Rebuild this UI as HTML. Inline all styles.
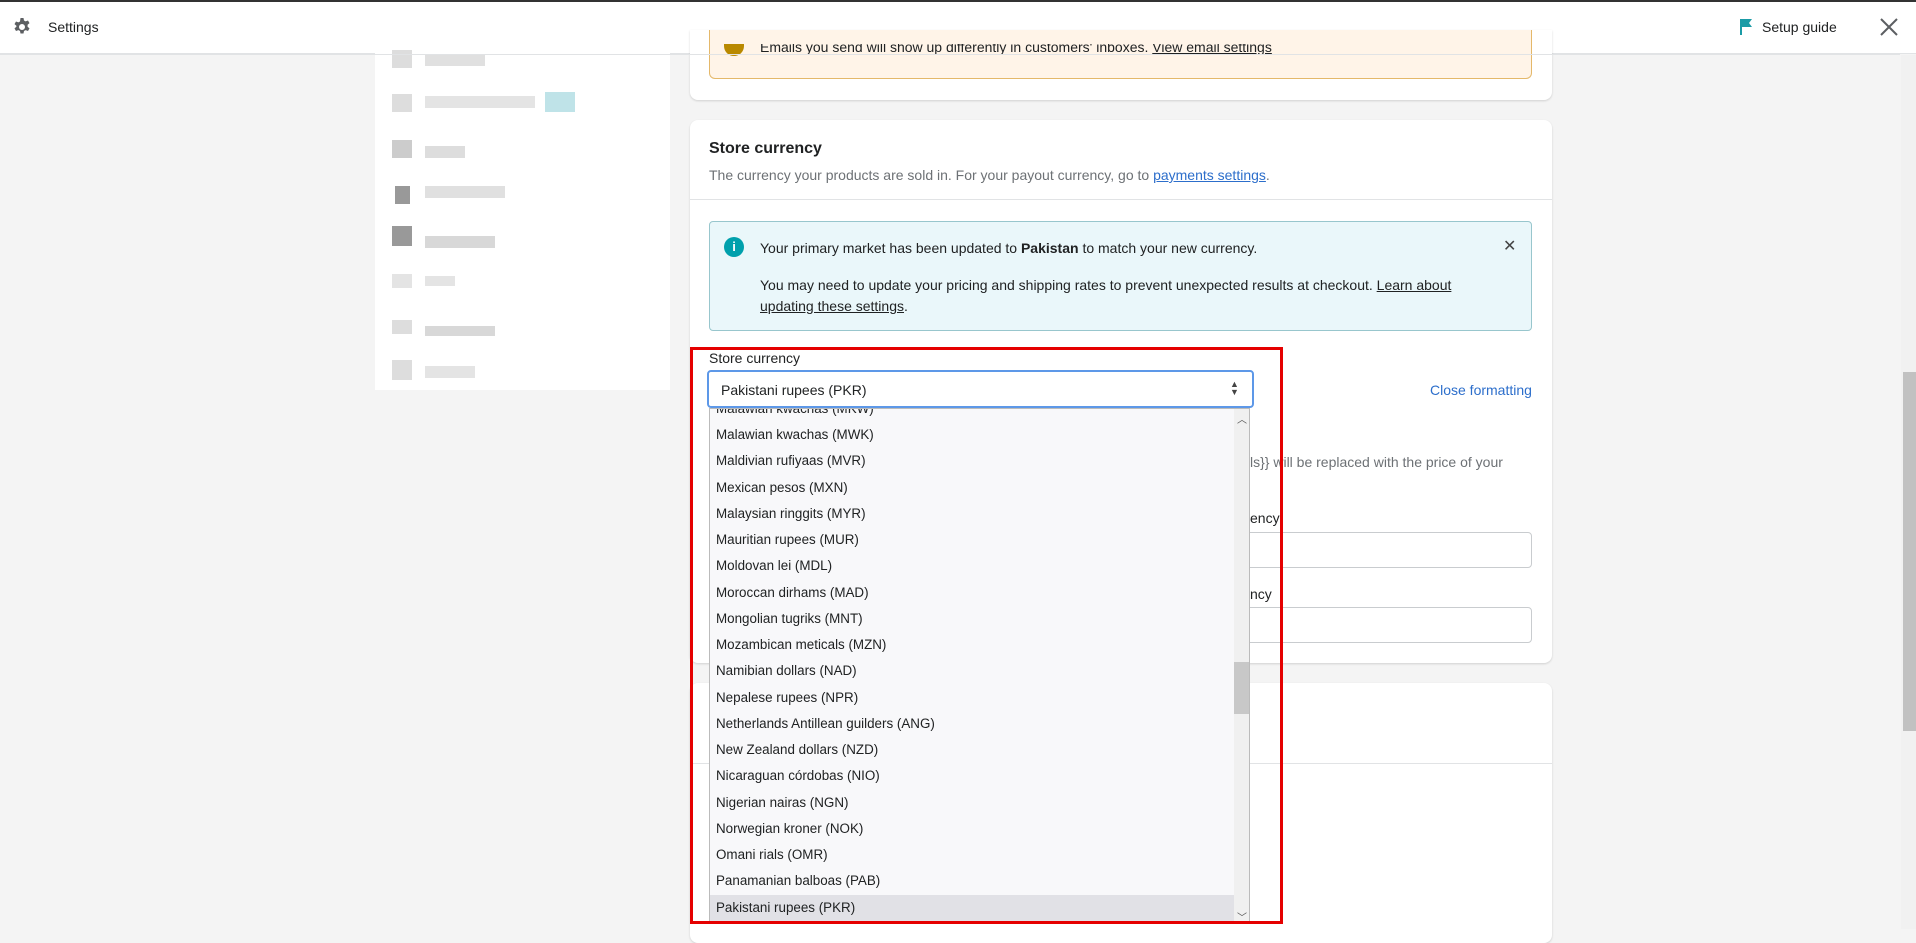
<!DOCTYPE html>
<html><head><meta charset="utf-8"><style>
*{box-sizing:border-box;margin:0;padding:0}
body{width:1916px;height:929px;overflow:hidden;background:#f4f4f4;font-family:"Liberation Sans",sans-serif;color:#202223;position:relative;font-size:14px}
.abs{position:absolute}
.top{left:0;top:0;width:1916px;height:54px;background:#fff;border-bottom:1px solid #e1e3e5;border-top:2px solid #333}
.card{background:#fff;border-radius:8px;box-shadow:0 1px 2px rgba(0,0,0,.15)}
.sb{background:#fff}
.blk{position:absolute;background:#d0d0d0}
.item{position:absolute;left:0;width:524px;height:26.25px;line-height:26.25px;padding-left:6px;font-size:13.4px;color:#202223;white-space:nowrap}
a{color:#2c6ecb}
</style></head><body>
<div class="abs top"></div>
<svg class="abs" style="left:12px;top:17px" width="20" height="20" viewBox="0 0 20 20"><path fill="#5c5f62" d="M8.5 1h3l.5 2.5 1.6.9 2.4-.9 1.5 2.6-1.9 1.7v1.9l1.9 1.7-1.5 2.6-2.4-.9-1.6.9-.5 2.5h-3l-.5-2.5-1.6-.9-2.4.9-1.5-2.6 1.9-1.7V8.8L2.5 7.1 4 4.5l2.4.9L8 4.5zM10 7a3 3 0 100 6 3 3 0 000-6z"/></svg>
<div class="abs" style="left:48px;top:19px;font-size:14px">Settings</div>
<svg class="abs" style="left:1738px;top:18px" width="16" height="18" viewBox="0 0 16 18"><path fill="#1a9ba6" d="M2 1h12l-3 4 3 4H4v8H2z"/></svg>
<div class="abs" style="left:1762px;top:19px;font-size:14px">Setup guide</div>
<svg class="abs" style="left:1879px;top:17px" width="20" height="20" viewBox="0 0 20 20"><path stroke="#5c5f62" stroke-width="2" d="M2 2l16 16M18 2L2 18"/></svg>

<div class="abs sb" style="left:375px;top:46px;width:295px;height:344px"></div>
<div class="blk" style="left:392px;top:50px;width:20px;height:18px;background:#ddd"></div><div class="blk" style="left:425px;top:54px;width:60px;height:12px;background:#e0e0e0"></div>
<div class="blk" style="left:392px;top:94px;width:20px;height:18px;background:#ddd"></div><div class="blk" style="left:425px;top:96px;width:110px;height:12px;background:#e4e4e4"></div><div class="blk" style="left:545px;top:92px;width:30px;height:20px;background:#bfe3e8"></div>
<div class="blk" style="left:392px;top:140px;width:20px;height:18px;background:#ccc"></div><div class="blk" style="left:425px;top:146px;width:40px;height:12px;background:#ddd"></div>
<div class="blk" style="left:395px;top:186px;width:15px;height:18px;background:#999"></div><div class="blk" style="left:425px;top:186px;width:80px;height:12px;background:#e0e0e0"></div>
<div class="blk" style="left:392px;top:226px;width:20px;height:20px;background:#999"></div><div class="blk" style="left:425px;top:236px;width:70px;height:12px;background:#d8d8d8"></div>
<div class="blk" style="left:392px;top:274px;width:20px;height:14px;background:#e4e4e4"></div><div class="blk" style="left:425px;top:276px;width:30px;height:10px;background:#e4e4e4"></div>
<div class="blk" style="left:392px;top:320px;width:20px;height:14px;background:#ddd"></div><div class="blk" style="left:425px;top:326px;width:70px;height:10px;background:#d8d8d8"></div>
<div class="blk" style="left:392px;top:360px;width:20px;height:20px;background:#ddd"></div><div class="blk" style="left:425px;top:366px;width:50px;height:12px;background:#e4e4e4"></div>

<div class="abs card" style="left:690px;top:30px;width:862px;height:70px;border-radius:0 0 8px 8px"></div>
<div class="abs" style="left:709px;top:30px;width:823px;height:49px;background:#fff4e8;border:1px solid #e4b86a;border-top:none;border-radius:0 0 6px 6px"></div>
<div class="abs" style="left:724px;top:44px;width:20px;height:12px;background:#b98900;border-radius:0 0 10px 10px"></div>
<div class="abs" style="left:760px;top:44px;font-size:14px;height:12px;overflow:hidden;line-height:6px">Emails you send will show up differently in customers' inboxes. <u>View email settings</u></div>
<div class="abs" style="left:0;top:54px;width:1900px;height:1px;background:#e1e3e5"></div>

<div class="abs card" style="left:690px;top:120px;width:862px;height:543px"></div>
<div class="abs" style="left:709px;top:140px;font-size:16px;font-weight:bold">Store currency</div>
<div class="abs" style="left:709px;top:167px;font-size:14px;color:#6d7175">The currency your products are sold in. For your payout currency, go to <a style="text-decoration:underline">payments settings</a>.</div>
<div class="abs" style="left:690px;top:199px;width:862px;height:1px;background:#e1e3e5"></div>
<div class="abs" style="left:709px;top:221px;width:823px;height:110px;background:#eaf7fa;border:1px solid #98c6cd;border-radius:4px"></div>
<div class="abs" style="left:724px;top:237px;width:20px;height:20px;border-radius:50%;background:#00a0ac;color:#fff;font-size:13px;font-weight:bold;text-align:center;line-height:20px">i</div>
<div class="abs" style="left:760px;top:240px;font-size:14px">Your primary market has been updated to <b>Pakistan</b> to match your new currency.</div>
<div class="abs" style="left:1503px;top:236px;font-size:16px;color:#444">✕</div>
<div class="abs" style="left:760px;top:275px;width:720px;font-size:14px;line-height:21px">You may need to update your pricing and shipping rates to prevent unexpected results at checkout. <u>Learn about updating these settings</u>.</div>

<div class="abs" style="left:709px;top:350px;font-size:14px">Store currency</div>
<div class="abs" style="left:707px;top:370px;width:547px;height:38px;border:2px solid #5d98e8;border-radius:4px;background:#fff"></div>
<div class="abs" style="left:721px;top:382px;font-size:14px">Pakistani rupees (PKR)</div>
<div class="abs" style="left:1230px;top:380px;font-size:9px;line-height:8px;color:#444">▲<br>▼</div>
<div class="abs" style="left:1430px;top:382px;font-size:14px;color:#2c6ecb">Close formatting</div>
<div class="abs" style="left:1250px;top:454px;font-size:14px;color:#6d7175">ls}} will be replaced with the price of your</div>
<div class="abs" style="left:1250px;top:510px;font-size:14px">ency</div>
<div class="abs" style="left:1222px;top:532px;width:310px;height:36px;border:1px solid #c9cccf;border-radius:4px"></div>
<div class="abs" style="left:1250px;top:586px;font-size:14px">ncy</div>
<div class="abs" style="left:1222px;top:607px;width:310px;height:36px;border:1px solid #c9cccf;border-radius:4px"></div>

<div class="abs card" style="left:690px;top:683px;width:862px;height:260px"></div>
<div class="abs" style="left:690px;top:763px;width:862px;height:1px;background:#e1e3e5"></div>

<div class="abs" style="left:709px;top:408px;width:541px;height:516px;background:#f8f8fa;border:1px solid #bbb;overflow:hidden">
<div style="position:relative;width:100%;height:100%">
<div class="item" style="top:-13.25px">Malawian kwachas (MKW)</div>
<div class="item" style="top:13px">Malawian kwachas (MWK)</div>
<div class="item" style="top:39.25px">Maldivian rufiyaas (MVR)</div>
<div class="item" style="top:65.5px">Mexican pesos (MXN)</div>
<div class="item" style="top:91.75px">Malaysian ringgits (MYR)</div>
<div class="item" style="top:118px">Mauritian rupees (MUR)</div>
<div class="item" style="top:144.25px">Moldovan lei (MDL)</div>
<div class="item" style="top:170.5px">Moroccan dirhams (MAD)</div>
<div class="item" style="top:196.75px">Mongolian tugriks (MNT)</div>
<div class="item" style="top:223px">Mozambican meticals (MZN)</div>
<div class="item" style="top:249.25px">Namibian dollars (NAD)</div>
<div class="item" style="top:275.5px">Nepalese rupees (NPR)</div>
<div class="item" style="top:301.75px">Netherlands Antillean guilders (ANG)</div>
<div class="item" style="top:328px">New Zealand dollars (NZD)</div>
<div class="item" style="top:354.25px">Nicaraguan córdobas (NIO)</div>
<div class="item" style="top:380.5px">Nigerian nairas (NGN)</div>
<div class="item" style="top:406.75px">Norwegian kroner (NOK)</div>
<div class="item" style="top:433px">Omani rials (OMR)</div>
<div class="item" style="top:459.25px">Panamanian balboas (PAB)</div>
<div class="item" style="top:485.5px;background:#e1e1e6">Pakistani rupees (PKR)</div>
<div style="position:absolute;left:524px;top:0;width:17px;height:516px;background:#f0f0f0"></div>
<div style="position:absolute;left:524px;top:253px;width:17px;height:52px;background:#c8c8c8"></div>
<div style="position:absolute;left:527px;top:2px;font-size:10px;color:#555">︿</div>
<div style="position:absolute;left:527px;top:500px;font-size:10px;color:#555">﹀</div>
</div></div>

<div class="abs" style="left:690px;top:347px;width:593px;height:577px;border:3px solid #e50000"></div>

<div class="abs" style="left:1901px;top:55px;width:15px;height:874px;background:#f1f1f1"></div>
<div class="abs" style="left:1903px;top:372px;width:13px;height:359px;background:#c1c1c1"></div>
</body></html>
